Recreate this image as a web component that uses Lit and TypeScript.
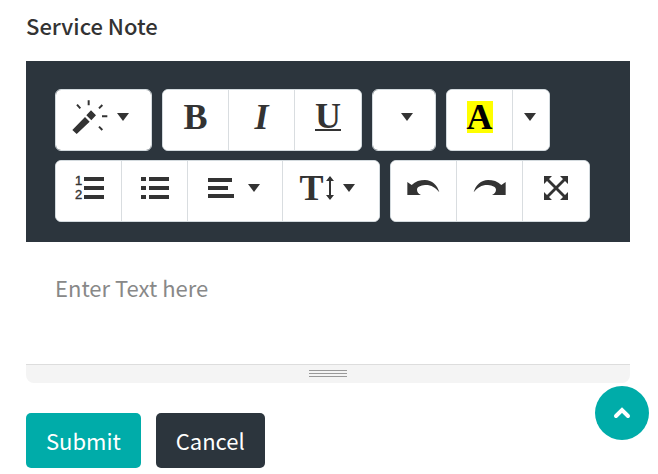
import { LitElement, html, svg, css } from "lit";
import { customElement } from "lit/decorators.js";

const caret = html`<svg class="caret" width="12" height="8" viewBox="0 0 12 8" aria-hidden="true"><path d="M0 0H12L6 8Z" /></svg>`;

const wand = html`<svg width="36" height="34" viewBox="51 32 108 102" aria-hidden="true">
  <path d="M52 122L65 134L104 97L90 83ZM108 63L123 78L109 93L94 78Z" />
  <path class="line" stroke-width="6" d="M101 33V48M66 46L76 57M132 57L142 47M141 81H157M132 112L142 122" />
</svg>`;

const ordered = html`<svg width="30" height="30" viewBox="0 0 30 30" aria-hidden="true">
  <path d="M10 4H30V8H10ZM10 13H30V17H10ZM10 22H30V26H10Z" />
  <text x="1" y="12">1</text><text x="1" y="26">2</text>
</svg>`;

const unordered = html`<svg width="28" height="24" viewBox="0 0 28 24" aria-hidden="true">
  <path d="M0 1H5V5H0ZM0 10H5V14H0ZM0 19H5V23H0ZM8 1H28V5H8ZM8 10H28V14H8ZM8 19H28V23H8Z" />
</svg>`;

const align = html`<svg width="26" height="20" viewBox="0 0 26 20" aria-hidden="true">
  <path d="M0 0H24V4H0ZM0 8H20V12H0ZM0 16H26V20H0Z" />
</svg>`;

const lineHeight = html`<svg width="8" height="24" viewBox="0 0 8 24" aria-hidden="true">
  <path d="M4 0L8 5H5V19H8L4 24L0 19H3V5H0Z" />
</svg>`;

const arrowShape = svg`<path d="M84 93L97 102C108 91 122 87 137 87C158 88 174 102 180 124C169 109 154 101 137 102C124 103 113 108 113 116C113 123 117 127 125 132H84Z" />`;
const undo = html`<svg width="33" height="21" viewBox="83 81 99 63" aria-hidden="true">${arrowShape}</svg>`;
const redo = html`<svg width="33" height="21" viewBox="83 81 99 63" aria-hidden="true"><g transform="translate(265 0) scale(-1 1)">${arrowShape}</g></svg>`;

const expand = html`<svg width="24" height="24" viewBox="0 0 24 24" aria-hidden="true">
  <path d="M0 0H8L5 3L12 10L19 3L16 0H24V8L21 5L14 12L21 19L24 16V24H16L19 21L12 14L5 21L8 24H0V16L3 19L10 12L3 5L0 8Z" />
</svg>`;

@customElement("app-root")
export class AppRoot extends LitElement {
  static styles = css`
    :host {
      display: block;
      position: relative;
      padding: 9px 28px 6px 26px;
      background: #fff;
      color: #333;
      font: 22px/32px "Noto Sans CJK SC", "Noto Sans", sans-serif;
    }
    * { box-sizing: border-box; }
    button, textarea { font: inherit; margin: 0; }
    button { border: 0; cursor: pointer; }
    .title { display: block; font-weight: 500; margin-bottom: 20px; }
    .toolbar {
      display: flex;
      flex-wrap: wrap;
      gap: 9px 10px;
      padding: 28px 29px 20px;
      background: #2c353d;
    }
    .group {
      display: flex;
      height: 62px;
      background: #fff;
      border: 1px solid #d3dade;
      border-radius: 6px;
      overflow: hidden;
    }
    .tool {
      display: flex;
      align-items: center;
      justify-content: center;
      width: 66px;
      padding: 0 0 6px;
      background: #fff;
      color: #333;
    }
    .tool:first-child { width: 65px; }
    .tool:last-child { width: 67px; }
    .tool + .tool { border-left: 1px solid #d9dde0; }
    .tool.menu { width: 95px; gap: 9px; padding-right: 6px; }
    .tool.wide { gap: 14px; padding-right: 2px; }
    .tool.height { width: 97px; padding-right: 8px; }
    .tool.blank { width: 62px; padding-left: 6px; }
    .tool.narrow { width: 37px; padding-right: 2px; }
    svg { display: block; flex: none; fill: currentColor; }
    svg text { font: 13px "Liberation Sans", sans-serif; stroke: currentColor; stroke-width: 0.4px; }
    .line { fill: none; stroke: currentColor; }
    .glyph { font: bold 36px/32px "Liberation Serif", serif; }
    .italic { font-style: italic; }
    .under { line-height: 26px; border-bottom: 2px solid; }
    .mark { background: #ff0; color: #000; }
    .pair { display: flex; align-items: center; gap: 2px; }
    .editor {
      display: block;
      width: 100%;
      height: 122px;
      padding: 29px;
      border: 0;
      outline: 0;
      resize: none;
      background: #fff;
      color: #333;
    }
    .editor::placeholder { color: #888; opacity: 1; }
    .status {
      display: flex;
      flex-direction: column;
      align-items: center;
      gap: 2px;
      padding: 5px 0 6px;
      border-top: 1px solid #ddd;
      border-radius: 0 0 8px 8px;
      background: #f4f4f4;
    }
    .grip { width: 38px; height: 1px; background: #999; }
    .actions { display: flex; gap: 15px; margin-top: 30px; }
    .action {
      height: 55px;
      padding: 0 20px 2px;
      border-radius: 5px;
      background: #2c353d;
      color: #fff;
    }
    .primary { background: #00aca9; }
    .top {
      position: absolute;
      right: 9px;
      bottom: 34px;
      display: flex;
      align-items: center;
      justify-content: center;
      width: 54px;
      height: 54px;
      border-radius: 50%;
      background: #00aca9;
      color: #fff;
      text-decoration: none;
    }
  `;

  render() {
    return html`
      <label class="title" for="note">Service Note</label>
      <div class="toolbar" role="toolbar" aria-label="Formatting">
        <div class="group"><button class="tool menu" aria-label="Style">${wand}${caret}</button></div>
        <div class="group">
          <button class="tool" aria-label="Bold"><span class="glyph">B</span></button>
          <button class="tool" aria-label="Italic"><span class="glyph italic">I</span></button>
          <button class="tool" aria-label="Underline"><span class="glyph under">U</span></button>
        </div>
        <div class="group"><button class="tool blank" aria-label="Font family">${caret}</button></div>
        <div class="group">
          <button class="tool" aria-label="Highlight"><span class="glyph mark">A</span></button>
          <button class="tool narrow" aria-label="More colors">${caret}</button>
        </div>
        <div class="group">
          <button class="tool" aria-label="Ordered list">${ordered}</button>
          <button class="tool" aria-label="Unordered list">${unordered}</button>
          <button class="tool menu wide" aria-label="Paragraph">${align}${caret}</button>
          <button class="tool menu height" aria-label="Line height">
            <span class="pair"><span class="glyph">T</span>${lineHeight}</span>${caret}
          </button>
        </div>
        <div class="group">
          <button class="tool" aria-label="Undo">${undo}</button>
          <button class="tool" aria-label="Redo">${redo}</button>
          <button class="tool" aria-label="Full screen">${expand}</button>
        </div>
      </div>
      <textarea class="editor" id="note" placeholder="Enter Text here"></textarea>
      <div class="status">
        <div class="grip"></div><div class="grip"></div><div class="grip"></div>
      </div>
      <div class="actions">
        <button class="action primary">Submit</button>
        <button class="action">Cancel</button>
      </div>
      <a class="top" href="#" aria-label="Back to top">
        <svg width="18" height="12" viewBox="0 0 18 12" aria-hidden="true">
          <path class="line" stroke-width="4" stroke-linecap="round" d="M3 9L9 3L15 9" />
        </svg>
      </a>
    `;
  }
}
